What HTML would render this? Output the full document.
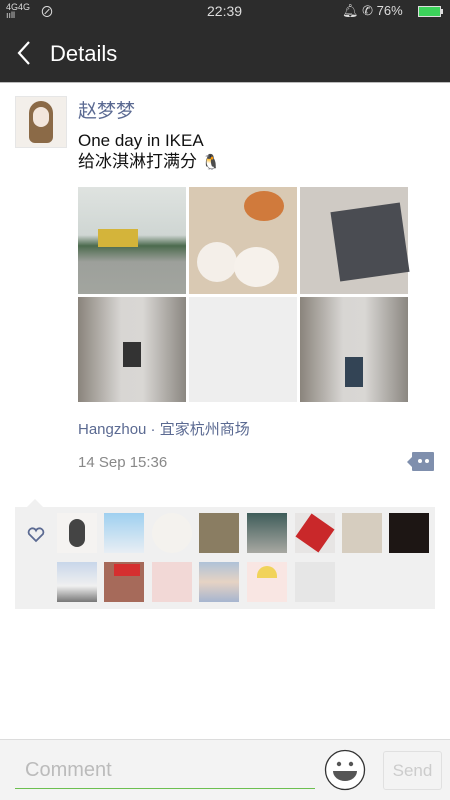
<!DOCTYPE html>
<html><head><meta charset="utf-8"><style>
*{margin:0;padding:0;box-sizing:border-box}
body{width:450px;height:800px;position:relative;background:#fff;font-family:"Liberation Sans","Noto Sans CJK SC",sans-serif;overflow:hidden}
.abs{position:absolute}
.status{left:0;top:0;width:450px;height:24px;background:#2c2c2c;color:#ddd;font-size:14px}
.nav{left:0;top:24px;width:450px;height:58px;background:#2c2c2c;color:#fff}
.img{position:absolute;width:108px}
.av{position:absolute;width:40px;height:40px}
</style></head><body>
<div class="abs status">
 <span class="abs" style="left:6px;top:3px;font-size:9px;line-height:8px">4G4G<br>ııll</span>
 <span class="abs" style="left:40px;top:2px;font-size:14px">⊘</span>
 <span class="abs" style="left:207px;top:3px">22:39</span>
 <span class="abs" style="left:342px;top:3px;font-size:13px">🔔︎ ✆ 76%</span>
 <div class="abs" style="left:418px;top:6px;width:23px;height:11px;border:1px solid #ddd;background:#3cd35b"></div>
 <div class="abs" style="left:441px;top:9px;width:2px;height:5px;background:#ddd"></div>
</div>
<div class="abs nav">
 <svg class="abs" style="left:16px;top:16px" width="16" height="26"><path d="M13 2 L3 13 L13 24" stroke="#fff" stroke-width="2.2" fill="none"/></svg>
 <span class="abs" style="left:50px;top:17px;font-size:22px">Details</span>
</div>
<div class="abs" style="left:0;top:82px;width:450px;height:1px;background:#bbb"></div>
<div class="abs" style="left:15px;top:96px;width:52px;height:52px;background:#f3efea;border:1px solid #e6e6e6">
 <div class="abs" style="left:13px;top:4px;width:24px;height:42px;border-radius:12px 12px 6px 6px;background:#8b6a47"></div>
 <div class="abs" style="left:17px;top:10px;width:16px;height:20px;border-radius:8px;background:#f3e6dc"></div>
</div>
<div class="abs" style="left:78px;top:96px;font-size:19px;color:#5b6a92">赵梦梦</div>
<div class="abs" style="left:78px;top:130px;font-size:17px;color:#111;line-height:21px">One day in IKEA<br>给冰淇淋打满分 <span style="font-size:15px">🐧</span></div>
<div class="img" style="left:78px;top:187px;height:107px;background:linear-gradient(#dfe3e0 0,#cfd6d3 45%,#4c6b4e 55%,#9da09b 70%,#a2a59f 100%)"><div class="abs" style="left:20px;top:42px;width:40px;height:18px;background:#d4b43a"></div></div>
<div class="img" style="left:189px;top:187px;height:107px;background:#d9c9b3"><div class="abs" style="left:8px;top:55px;width:40px;height:40px;border-radius:50%;background:#f4efe9"></div><div class="abs" style="left:55px;top:4px;width:40px;height:30px;border-radius:50%;background:#d07a3c"></div><div class="abs" style="left:45px;top:60px;width:45px;height:40px;border-radius:50%;background:#f6f1eb"></div></div>
<div class="img" style="left:300px;top:187px;height:107px;background:#cfcac4"><div class="abs" style="left:35px;top:20px;width:70px;height:70px;background:#4a4c52;transform:rotate(-8deg)"></div></div>
<div class="img" style="left:78px;top:297px;height:105px;background:linear-gradient(90deg,#8a847c,#d8d6d3 40%,#d9d7d4 60%,#8b8781)"><div class="abs" style="left:45px;top:45px;width:18px;height:25px;background:#333"></div></div>
<div class="img" style="left:189px;top:297px;height:105px;background:#eeeeee"></div>
<div class="img" style="left:300px;top:297px;height:105px;background:linear-gradient(90deg,#8a847c,#d8d6d3 40%,#d9d7d4 60%,#8b8781)"><div class="abs" style="left:45px;top:60px;width:18px;height:30px;background:#345"></div></div>
<div class="abs" style="left:78px;top:418px;font-size:15px;color:#5b6a92">Hangzhou · 宜家杭州商场</div>
<div class="abs" style="left:78px;top:454px;font-size:15px;color:#888">14 Sep 15:36</div>
<div class="abs" style="left:412px;top:452px;width:22px;height:19px;background:#7f8fad;border-radius:1px"></div>
<div class="abs" style="left:407px;top:457px;border:5px solid transparent;border-right-color:#7f8fad;border-left:0"></div>
<div class="abs" style="left:418px;top:459px;width:4px;height:4px;border-radius:50%;background:#fff"></div>
<div class="abs" style="left:425px;top:459px;width:4px;height:4px;border-radius:50%;background:#fff"></div>
<div class="abs" style="left:15px;top:507px;width:420px;height:102px;background:#f0f0f0"></div>
<div class="abs" style="left:27px;top:499px;border:8px solid transparent;border-bottom-color:#f0f0f0;border-top:0"></div>
<svg class="abs" style="left:27px;top:527px" width="18" height="16"><path d="M9 14 L2 7 A3.8 3.8 0 0 1 9 3.5 A3.8 3.8 0 0 1 16 7 Z" stroke="#5b6a92" stroke-width="1.8" fill="none"/></svg>
<div class="av" style="left:57px;top:513px;background:#f5f3f1"><div class="abs" style="left:12px;top:6px;width:16px;height:28px;border-radius:8px;background:#444"></div></div>
<div class="av" style="left:104px;top:513px;background:linear-gradient(#9fd0f0,#e8eef4)"></div>
<div class="av" style="left:152px;top:513px;background:#f4f2ee;border-radius:50%"></div>
<div class="av" style="left:199px;top:513px;background:#8a7d62"></div>
<div class="av" style="left:247px;top:513px;background:linear-gradient(#3f5d5a,#a8a8a2)"></div>
<div class="av" style="left:295px;top:513px;background:#e7e5e4"><div class="abs" style="left:6px;top:6px;width:28px;height:28px;background:#c9282a;transform:rotate(35deg)"></div></div>
<div class="av" style="left:342px;top:513px;background:#d6cdbf"></div>
<div class="av" style="left:389px;top:513px;background:#1d1614"></div>
<div class="av" style="left:57px;top:562px;background:linear-gradient(#c8d6ea,#f0f0f0 60%,#777)"></div>
<div class="av" style="left:104px;top:562px;background:#a66a5a"><div class="abs" style="left:10px;top:2px;width:26px;height:12px;background:#d52f2f"></div></div>
<div class="av" style="left:152px;top:562px;background:#f2d8d6"></div>
<div class="av" style="left:199px;top:562px;background:linear-gradient(#afc2d8,#e6d3c4 50%,#a6b5cf)"></div>
<div class="av" style="left:247px;top:562px;background:#f9e6e3"><div class="abs" style="left:10px;top:4px;width:20px;height:12px;border-radius:10px 10px 0 0;background:#f1d35a"></div></div>
<div class="av" style="left:295px;top:562px;background:#e6e6e6"></div>
<div class="abs" style="left:0;top:739px;width:450px;height:61px;background:#f3f3f3;border-top:1px solid #dcdcdc"></div>
<div class="abs" style="left:25px;top:759px;font-size:20px;color:#bbb">Comment</div>
<div class="abs" style="left:15px;top:788px;width:300px;height:1px;background:#6cbf50"></div>
<svg class="abs" style="left:324px;top:749px" width="42" height="42"><circle cx="21" cy="21" r="19.5" fill="#fff" stroke="#333" stroke-width="1.3"/><circle cx="15" cy="15" r="2.2" fill="#555"/><circle cx="27" cy="15" r="2.2" fill="#555"/><path d="M9 22 H33 A12 10 0 0 1 9 22 Z" fill="#555"/></svg>
<div class="abs" style="left:383px;top:751px;width:59px;height:39px;border:1px solid #e0e0e0;border-radius:3px;color:#ccc;font-size:17px;text-align:center;line-height:37px">Send</div>
</body></html>
